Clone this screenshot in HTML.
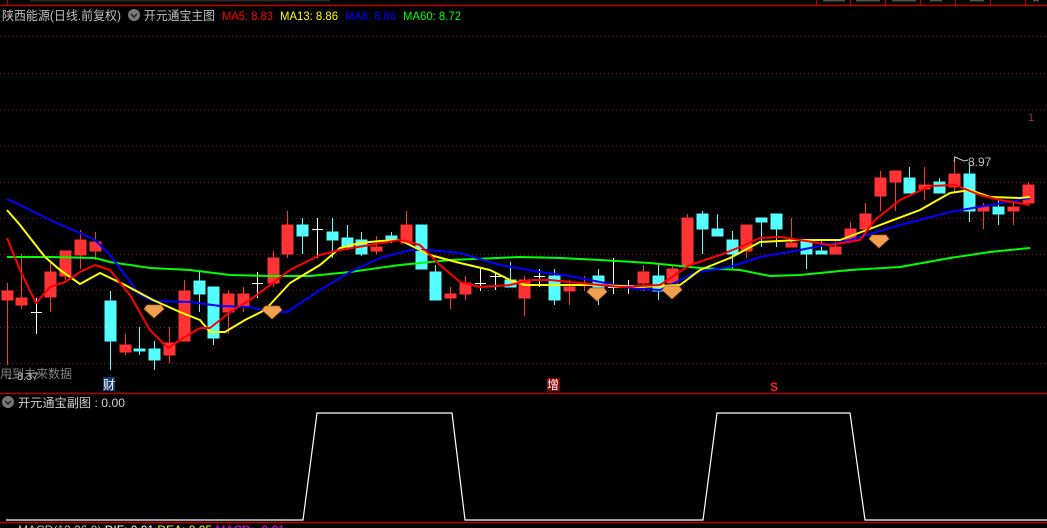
<!DOCTYPE html>
<html><head><meta charset="utf-8"><style>
html,body{margin:0;padding:0;background:#000;width:1047px;height:528px;overflow:hidden}
svg{display:block}
text{font-family:"Liberation Sans","Noto Sans CJK SC",sans-serif}
</style></head><body>
<svg width="1047" height="528" viewBox="0 0 1047 528" xmlns="http://www.w3.org/2000/svg">
<rect width="1047" height="528" fill="#000"/>
<!-- top bar -->
<line x1="0" y1="5.5" x2="1047" y2="5.5" stroke="#c00000" stroke-width="1.5"/>
<g stroke="#c00000" stroke-width="1">
<line x1="816.5" y1="0" x2="816.5" y2="5"/><line x1="850.5" y1="0" x2="850.5" y2="5"/><line x1="885.5" y1="0" x2="885.5" y2="5"/><line x1="920.5" y1="0" x2="920.5" y2="5"/><line x1="955.5" y1="0" x2="955.5" y2="5"/><line x1="990.5" y1="0" x2="990.5" y2="5"/><line x1="1025.5" y1="0" x2="1025.5" y2="5"/><line x1="7.5" y1="0" x2="7.5" y2="5"/>
</g>
<g fill="#888"><rect x="30" y="0" width="300" height="1.5" opacity="0.3"/><rect x="823" y="0" width="22" height="1.5" opacity="0.6"/><rect x="856" y="0" width="24" height="1.5" opacity="0.6"/><rect x="892" y="0" width="24" height="1.5" opacity="0.6"/><rect x="930" y="0" width="12" height="1.5" opacity="0.6"/><rect x="970" y="0" width="14" height="1.5" opacity="0.6"/><rect x="1033" y="0" width="6" height="1.5" opacity="0.6"/></g>
<!-- header -->
<text x="2" y="20" font-size="12.5" fill="#c0c0c0" textLength="119" lengthAdjust="spacingAndGlyphs">陕西能源(日线.前复权)</text>
<circle cx="134" cy="15" r="6" fill="#777"/><path d="M131 14 l3 3 l3 -3" stroke="#222" stroke-width="1.5" fill="none"/>
<text x="144" y="20" font-size="12.5" fill="#c0c0c0" textLength="71" lengthAdjust="spacingAndGlyphs">开元通宝主图</text>
<text x="222" y="20" font-size="12" fill="#ff0000" textLength="51" lengthAdjust="spacingAndGlyphs">MA5: 8.83</text>
<text x="280" y="20" font-size="12" fill="#ffff00" textLength="58" lengthAdjust="spacingAndGlyphs">MA13: 8.86</text>
<text x="345" y="20" font-size="12" fill="#0000ff" textLength="51" lengthAdjust="spacingAndGlyphs">MA8: 8.86</text>
<text x="403" y="20" font-size="12" fill="#00ff00" textLength="58" lengthAdjust="spacingAndGlyphs">MA60: 8.72</text>
<!-- grid -->
<g stroke="#8a1010" stroke-width="1" stroke-dasharray="1,3">
<line x1="0" y1="36.5" x2="1047" y2="36.5"/><line x1="0" y1="73.5" x2="1047" y2="73.5"/><line x1="0" y1="109.5" x2="1047" y2="109.5"/><line x1="0" y1="146.5" x2="1047" y2="146.5"/><line x1="0" y1="182.5" x2="1047" y2="182.5"/><line x1="0" y1="218.5" x2="1047" y2="218.5"/><line x1="0" y1="254.5" x2="1047" y2="254.5"/><line x1="0" y1="290.5" x2="1047" y2="290.5"/><line x1="0" y1="327.5" x2="1047" y2="327.5"/><line x1="0" y1="363.5" x2="1047" y2="363.5"/>
</g>
<text x="1028" y="121" font-size="11" fill="#a0207a">1</text>
<!-- candles -->
<g stroke-width="1">
<g fill="#ff3333" stroke="#ff3333">
<line x1="7.5" y1="283" x2="7.5" y2="365"/><rect x="2" y="291" width="11" height="9"/>
<line x1="21.5" y1="254" x2="21.5" y2="309"/><rect x="16" y="298" width="11" height="7"/>
<line x1="50.5" y1="262" x2="50.5" y2="312"/><rect x="45" y="272" width="11" height="25"/>
<line x1="65.5" y1="254" x2="65.5" y2="280"/><rect x="60" y="251" width="11" height="25"/>
<line x1="80.5" y1="230" x2="80.5" y2="269"/><rect x="75" y="240" width="11" height="15"/>
<line x1="95.5" y1="232" x2="95.5" y2="260"/><rect x="90" y="242" width="11" height="9"/>
<line x1="125.5" y1="334" x2="125.5" y2="355"/><rect x="120" y="345" width="11" height="7"/>
<line x1="169.5" y1="327" x2="169.5" y2="363"/><rect x="164" y="343" width="11" height="12"/>
<line x1="184.5" y1="280" x2="184.5" y2="341"/><rect x="179" y="291" width="11" height="50"/>
<line x1="228.5" y1="290" x2="228.5" y2="334"/><rect x="223" y="294" width="11" height="18"/>
<line x1="243.5" y1="287" x2="243.5" y2="312"/><rect x="238" y="294" width="11" height="12"/>
<line x1="273.5" y1="251" x2="273.5" y2="287"/><rect x="268" y="258" width="11" height="25"/>
<line x1="287.5" y1="211" x2="287.5" y2="258"/><rect x="282" y="225" width="11" height="29"/>
<line x1="376.5" y1="236" x2="376.5" y2="254"/><rect x="371" y="247" width="11" height="4"/>
<line x1="406.5" y1="211" x2="406.5" y2="243"/><rect x="401" y="225" width="11" height="18"/>
<line x1="450.5" y1="287" x2="450.5" y2="309"/><rect x="445" y="294" width="11" height="4"/>
<line x1="465.5" y1="276" x2="465.5" y2="300"/><rect x="460" y="283" width="11" height="11"/>
<line x1="524.5" y1="276" x2="524.5" y2="316"/><rect x="519" y="280" width="11" height="18"/>
<line x1="569.5" y1="280" x2="569.5" y2="305"/><rect x="564" y="287" width="11" height="4"/>
<line x1="584.5" y1="276" x2="584.5" y2="291"/>
<line x1="643.5" y1="265" x2="643.5" y2="291"/><rect x="638" y="272" width="11" height="11"/>
<line x1="672.5" y1="265" x2="672.5" y2="288"/><rect x="667" y="269" width="11" height="14"/>
<line x1="687.5" y1="214" x2="687.5" y2="265"/><rect x="682" y="218" width="11" height="47"/>
<line x1="746.5" y1="225" x2="746.5" y2="258"/><rect x="741" y="225" width="11" height="26"/>
<line x1="791.5" y1="218" x2="791.5" y2="247"/><rect x="786" y="243" width="11" height="4"/>
<line x1="835.5" y1="240" x2="835.5" y2="254"/><rect x="830" y="247" width="11" height="7"/>
<line x1="850.5" y1="222" x2="850.5" y2="240"/><rect x="845" y="229" width="11" height="11"/>
<line x1="865.5" y1="203" x2="865.5" y2="232"/><rect x="860" y="214" width="11" height="15"/>
<line x1="880.5" y1="171" x2="880.5" y2="211"/><rect x="875" y="178" width="11" height="18"/>
<line x1="895.5" y1="171" x2="895.5" y2="211"/><rect x="890" y="171" width="11" height="11"/>
<line x1="924.5" y1="167" x2="924.5" y2="200"/><rect x="919" y="185" width="11" height="4"/>
<line x1="954.5" y1="156" x2="954.5" y2="193"/><rect x="949" y="174" width="11" height="13"/>
<line x1="983.5" y1="203" x2="983.5" y2="229"/><rect x="978" y="207" width="11" height="4"/>
<line x1="1013.5" y1="200" x2="1013.5" y2="225"/><rect x="1008" y="207" width="11" height="4"/>
<line x1="1028.5" y1="182" x2="1028.5" y2="203"/><rect x="1023" y="185" width="11" height="18"/>
</g>
<g fill="#55ffff" stroke="#55ffff">
<line x1="110.5" y1="291" x2="110.5" y2="370"/><rect x="105" y="301" width="11" height="40"/>
<line x1="139.5" y1="327" x2="139.5" y2="355"/><rect x="134" y="349" width="11" height="2"/>
<line x1="154.5" y1="341" x2="154.5" y2="370"/><rect x="149" y="349" width="11" height="11"/>
<line x1="199.5" y1="272" x2="199.5" y2="312"/><rect x="194" y="281" width="11" height="13"/>
<line x1="213.5" y1="287" x2="213.5" y2="345"/><rect x="208" y="287" width="11" height="51"/>
<line x1="302.5" y1="218" x2="302.5" y2="254"/><rect x="297" y="225" width="11" height="11"/>
<line x1="332.5" y1="218" x2="332.5" y2="258"/><rect x="327" y="232" width="11" height="8"/>
<line x1="347.5" y1="225" x2="347.5" y2="250"/><rect x="342" y="238" width="11" height="9"/>
<line x1="361.5" y1="232" x2="361.5" y2="256"/><rect x="356" y="240" width="11" height="14"/>
<line x1="391.5" y1="232" x2="391.5" y2="243"/><rect x="386" y="236" width="11" height="5"/>
<line x1="421.5" y1="225" x2="421.5" y2="269"/><rect x="416" y="225" width="11" height="44"/>
<line x1="435.5" y1="265" x2="435.5" y2="300"/><rect x="430" y="272" width="11" height="28"/>
<line x1="510.5" y1="262" x2="510.5" y2="287"/><rect x="505" y="280" width="11" height="7"/>
<line x1="554.5" y1="269" x2="554.5" y2="305"/><rect x="549" y="276" width="11" height="24"/>
<line x1="598.5" y1="269" x2="598.5" y2="305"/><rect x="593" y="276" width="11" height="11"/>
<line x1="658.5" y1="265" x2="658.5" y2="300"/><rect x="653" y="276" width="11" height="15"/>
<line x1="702.5" y1="211" x2="702.5" y2="254"/><rect x="697" y="214" width="11" height="15"/>
<line x1="717.5" y1="214" x2="717.5" y2="236"/><rect x="712" y="229" width="11" height="7"/>
<line x1="732.5" y1="231" x2="732.5" y2="269"/><rect x="727" y="240" width="11" height="14"/>
<line x1="761.5" y1="218" x2="761.5" y2="247"/><rect x="756" y="218" width="11" height="4"/>
<line x1="776.5" y1="214" x2="776.5" y2="247"/><rect x="771" y="214" width="11" height="15"/>
<line x1="806.5" y1="240" x2="806.5" y2="269"/><rect x="801" y="240" width="11" height="14"/>
<line x1="821.5" y1="240" x2="821.5" y2="254"/><rect x="816" y="251" width="11" height="3"/>
<line x1="909.5" y1="167" x2="909.5" y2="193"/><rect x="904" y="178" width="11" height="15"/>
<line x1="939.5" y1="178" x2="939.5" y2="193"/><rect x="934" y="182" width="11" height="11"/>
<line x1="969.5" y1="164" x2="969.5" y2="222"/><rect x="964" y="174" width="11" height="37"/>
<line x1="998.5" y1="200" x2="998.5" y2="225"/><rect x="993" y="207" width="11" height="7"/>
</g>
<g stroke="#ffffff">
<line x1="36.5" y1="298" x2="36.5" y2="334"/><line x1="31" y1="312.5" x2="42" y2="312.5"/>
<line x1="257.5" y1="272" x2="257.5" y2="298"/><line x1="252" y1="283.5" x2="263" y2="283.5"/>
<line x1="317.5" y1="218" x2="317.5" y2="258"/><line x1="312" y1="229.5" x2="323" y2="229.5"/>
<line x1="480.5" y1="269" x2="480.5" y2="291"/><line x1="475" y1="283.5" x2="486" y2="283.5"/>
<line x1="495.5" y1="272" x2="495.5" y2="290"/><line x1="490" y1="276.5" x2="501" y2="276.5"/>
<line x1="539.5" y1="269" x2="539.5" y2="287"/><line x1="534" y1="276.5" x2="545" y2="276.5"/>
<line x1="613.5" y1="258" x2="613.5" y2="294"/><line x1="608" y1="287.5" x2="619" y2="287.5"/>
<line x1="628.5" y1="280" x2="628.5" y2="294"/><line x1="623" y1="285.5" x2="634" y2="285.5"/>
</g>
</g>
<!-- MAs -->
<g fill="none" stroke-width="2" stroke-linejoin="round">
<polyline stroke="#00ff00" points="7,257 50,257 95,258 110,262 150,268 190,270 230,275 270,276 310,276 350,272 400,265 450,260 520,257 560,258 600,260 650,263 700,268 740,270 770,276 800,275 850,270 900,267 950,258 990,252 1030,248"/>
<polyline stroke="#0000ff" points="7,199 20,205 50,220 80,233 95,240 110,255 125,275 140,295 153,301 190,302 220,306 250,307 270,312 287,312 320,290 350,272 380,258 410,250 430,250 460,253 500,265 540,272 570,276 600,282 630,288 660,290 697,272 730,267 760,257 800,250 850,240 900,225 950,212 990,205 1030,198"/>
<polyline stroke="#ffff00" points="7,210 20,225 45,257 60,270 80,284 100,273 125,285 153,300 180,312 200,320 210,332 225,332 245,320 265,310 290,283 320,265 340,248 360,243 380,241 400,240 410,245 430,255 460,263 490,270 510,280 525,285 560,285 600,285 640,287 680,285 700,270 730,258 760,242 800,240 840,240 880,225 920,210 950,193 970,190 990,197 1020,198 1030,197"/>
<polyline stroke="#ff0000" points="7,238 20,270 36,303 50,287 65,282 80,272 95,265 110,270 130,295 150,330 168,348 180,340 200,328 210,328 230,312 250,300 270,285 290,270 320,255 340,250 370,245 400,240 420,245 440,265 460,282 480,287 510,285 530,280 550,280 570,282 590,284 620,287 660,285 690,265 720,255 740,247 760,238 780,237 800,240 830,245 860,240 875,220 900,200 930,186 955,185 980,195 1000,200 1030,205"/>
</g>
<!-- diamonds -->
<g fill="#f0a050" stroke="#c06020" stroke-width="0.8">
<path d="M147 305 h14 l3 4 l-10 9 l-10 -9 z"/>
<path d="M265 306 h14 l3 4 l-10 9 l-10 -9 z"/>
<path d="M590 288 h14 l3 4 l-10 9 l-10 -9 z"/>
<path d="M665 286 h14 l3 4 l-10 9 l-10 -9 z"/>
<path d="M872 235 h14 l3 4 l-10 9 l-10 -9 z"/>
</g>
<path d="M955 157 l-1 5 M955 157 l9 4 l4 -1" stroke="#ccc" fill="none"/>
<text x="968" y="166" font-size="12" fill="#c0c0c0">8.97</text>
<text x="0" y="378" font-size="12" fill="#808080">用到未来数据</text>
<text x="6" y="380" font-size="11" fill="#c0c0c0">←8.37</text>
<rect x="103" y="377" width="12" height="14" fill="#103a70"/>
<text x="103" y="389" font-size="12" fill="#fff">财</text>
<rect x="547" y="378" width="13" height="13" fill="#8a0000"/>
<text x="547" y="389" font-size="12" fill="#fff">增</text>
<text x="770" y="391" font-size="12" fill="#ff2020" font-weight="bold">S</text>
<!-- subchart -->
<line x1="0" y1="393.5" x2="1047" y2="393.5" stroke="#b00000" stroke-width="1.5"/>
<circle cx="8" cy="402" r="6" fill="#777"/><path d="M5 401 l3 3 l3 -3" stroke="#222" stroke-width="1.5" fill="none"/>
<text x="18" y="407" font-size="12" fill="#d0d0d0" textLength="107" lengthAdjust="spacingAndGlyphs">开元通宝副图 : 0.00</text>
<polyline fill="none" stroke="#ffffff" stroke-width="1.2" points="6,520 303,520 317,413 452,413 465,520 703,520 717,413 850,413 865,520 1047,520"/>
<line x1="0" y1="522.5" x2="1047" y2="522.5" stroke="#c00000" stroke-width="1.5"/>
<text x="18" y="534" font-size="12" fill="#c0c0c0">MACD(12,26,9) <tspan fill="#fff">DIF: 0.01</tspan> <tspan fill="#ffff00">DEA: 0.05</tspan> <tspan fill="#ff00ff">MACD: -0.01</tspan></text>
</svg>
</body></html>
